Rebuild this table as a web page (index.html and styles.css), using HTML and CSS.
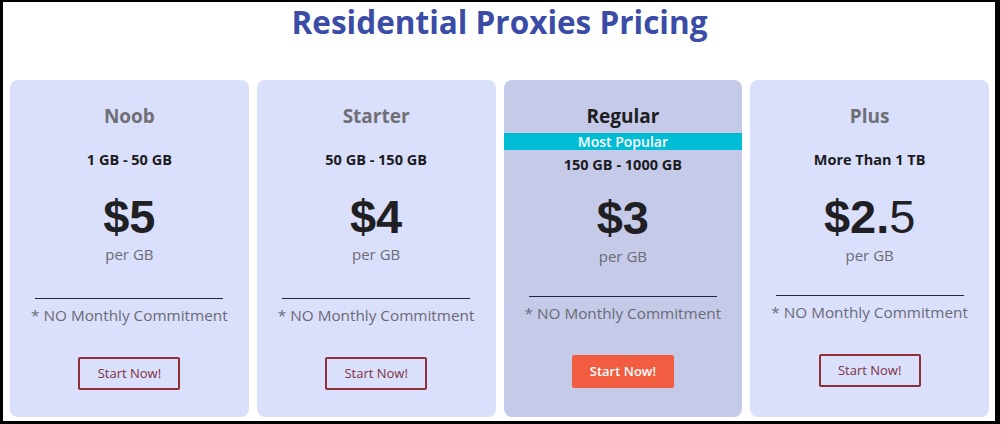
FILE: index.html
```html
<!DOCTYPE html>
<html lang="en">
<head>
<meta charset="utf-8">
<title>Residential Proxies Pricing</title>
<link rel="stylesheet" href="styles.css">
</head>
<body>
<div class="frame">
  <h1 class="page-title">Residential Proxies Pricing</h1>
  <div class="plans">
    <div class="plan">
      <h2 class="plan-name">Noob</h2>
      <div class="plan-range">1 GB - 50 GB</div>
      <div class="plan-price">$5</div>
      <div class="plan-unit">per GB</div>
      <hr class="plan-rule">
      <div class="plan-note">* NO Monthly Commitment</div>
      <a class="plan-btn" href="#">Start Now!</a>
    </div>
    <div class="plan">
      <h2 class="plan-name">Starter</h2>
      <div class="plan-range">50 GB - 150 GB</div>
      <div class="plan-price">$4</div>
      <div class="plan-unit">per GB</div>
      <hr class="plan-rule">
      <div class="plan-note">* NO Monthly Commitment</div>
      <a class="plan-btn" href="#">Start Now!</a>
    </div>
    <div class="plan plan-featured">
      <h2 class="plan-name">Regular</h2>
      <div class="plan-badge">Most Popular</div>
      <div class="plan-range">150 GB - 1000 GB</div>
      <div class="plan-price">$3</div>
      <div class="plan-unit">per GB</div>
      <hr class="plan-rule">
      <div class="plan-note">* NO Monthly Commitment</div>
      <a class="plan-btn plan-btn-primary" href="#">Start Now!</a>
    </div>
    <div class="plan plan-last">
      <h2 class="plan-name">Plus</h2>
      <div class="plan-range">More Than 1 TB</div>
      <div class="plan-price">$2.<span class="plan-price-light">5</span></div>
      <div class="plan-unit">per GB</div>
      <hr class="plan-rule">
      <div class="plan-note">* NO Monthly Commitment</div>
      <a class="plan-btn" href="#">Start Now!</a>
    </div>
  </div>
</div>
</body>
</html>
```
FILE: styles.css
```css
* { box-sizing: border-box; }
html, body { margin: 0; padding: 0; background: #000; }
body {
  width: 1000px;
  height: 424px;
  font-family: "Open Sans", "Liberation Sans", sans-serif;
}
.frame {
  height: 424px;
  background: #fff;
  border-style: solid;
  border-color: #000;
  border-width: 2px 5px 3px 3px;
  padding: 0 6px 4px 7px;
  display: flex;
  flex-direction: column;
}
.page-title {
  margin: 0;
  height: 40px;
  line-height: 40px;
  text-align: center;
  font-size: 31.5px;
  font-weight: 700;
  color: #3b4ca6;
}
.plans {
  margin-top: 38px;
  flex: 1;
  display: flex;
  gap: 8px;
}
.plan {
  flex: 1;
  background: #dadffb;
  border-radius: 8px;
  padding-top: 24px;
  display: flex;
  flex-direction: column;
  align-items: center;
  text-align: center;
}
.plan-featured { background: #c5cae8; }
.plan-name {
  margin: 0;
  height: 24px;
  line-height: 24px;
  font-size: 19px;
  font-weight: 700;
  color: #6f6f76;
}
.plan-featured .plan-name { color: #1e1e22; }
.plan-badge {
  align-self: stretch;
  margin-top: 5px;
  height: 17px;
  line-height: 17px;
  background: #00bdd6;
  color: #fff;
  font-size: 14px;
  font-weight: 600;
}
.plan-range {
  margin-top: 21.5px;
  height: 20px;
  line-height: 20px;
  font-size: 14.5px;
  font-weight: 700;
  color: #1b1b1e;
}
.plan-featured .plan-range { margin-top: 4.5px; }
.plan-last .plan-range { margin-top: 22px; }
.plan-price {
  margin-top: 22.5px;
  height: 50px;
  line-height: 50px;
  font-family: "Liberation Sans", "Open Sans", sans-serif;
  font-size: 47px;
  font-weight: 700;
  color: #202024;
}
.plan-featured .plan-price { margin-top: 18.5px; }
.plan-last .plan-price { margin-top: 22px; }
.plan-price-light { font-weight: 400; }
.plan-unit {
  margin-top: 2px;
  height: 20px;
  line-height: 20px;
  font-size: 15px;
  color: #6b6b76;
}
.plan-featured .plan-unit, .plan-last .plan-unit { margin-top: 3px; }
.plan-rule {
  margin: 34px 0 0;
  width: 188px;
  height: 1px;
  border: 0;
  border-top: 1px solid #1c2645;
}
.plan-featured .plan-rule, .plan-last .plan-rule { margin-top: 30px; }
.plan-note {
  margin-top: 5.5px;
  height: 20px;
  line-height: 20px;
  font-size: 15.3px;
  color: #6a6a76;
}
.plan-btn {
  margin-top: 32.5px;
  width: 102px;
  height: 33px;
  line-height: 29px;
  border: 2px solid #8e2f35;
  border-radius: 2px;
  font-size: 13px;
  color: #7a3242;
  text-decoration: none;
}
.plan-btn-primary {
  background: #f25d41;
  border-color: #f25d41;
  color: #fff;
  font-weight: 600;
}
```
